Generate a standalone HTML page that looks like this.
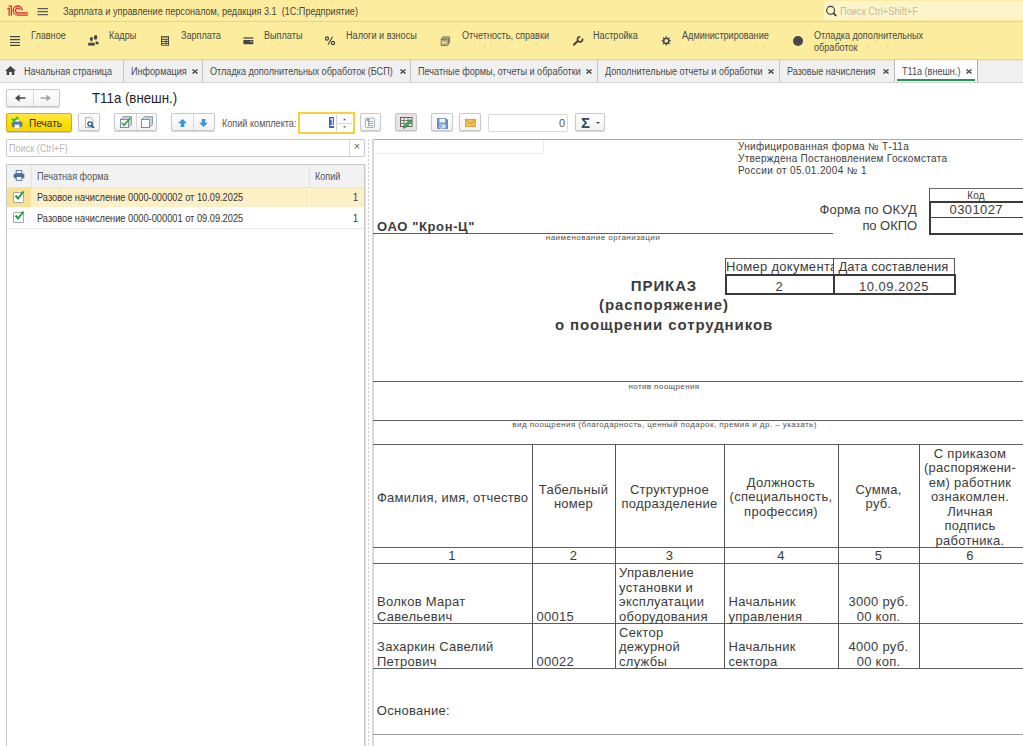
<!DOCTYPE html>
<html><head><meta charset="utf-8">
<style>
*{box-sizing:border-box;margin:0;padding:0}
html,body{width:1023px;height:746px;overflow:hidden;background:#fff;font-family:"Liberation Sans",sans-serif;color:#333}
.a{position:absolute}
.t{position:absolute;white-space:nowrap;font-size:10px;line-height:12px;transform:scaleX(.91);transform-origin:0 0;color:#4a4a4a}
#top{position:absolute;left:0;top:0;width:1023px;height:22px;background:#FBEC9E;border-bottom:1px solid #E2D48A}
#sec{position:absolute;left:0;top:22px;width:1023px;height:38px;background:#FBEC9E;border-bottom:1px solid #E4D68E}
#tabs{position:absolute;left:0;top:60px;width:1023px;height:23px;background:#F0F0F0;border-bottom:1px solid #D4D4D4}
.sep{position:absolute;top:60px;width:1px;height:22px;background:#C6C6C6}
.x{position:absolute;font-size:11px;font-weight:bold;color:#555;line-height:12px}
.btn{position:absolute;border:1px solid #C9C9C9;border-radius:2px;background:linear-gradient(#fff,#F2F2F2);box-shadow:0 1px 1px rgba(0,0,0,.18)}
.s{position:absolute;white-space:nowrap;font-size:13px;line-height:15px;color:#3c3c3c;letter-spacing:.2px}
.hl{position:absolute;background:#444;height:1px}
.vl{position:absolute;background:#444;width:1px}
</style></head><body>
<!-- title bar -->
<div id="top"></div>
<svg class="a" style="left:0;top:0" width="30" height="20" viewBox="0 0 30 20">
 <path d="M7.3 8.5 H9.2 V15.8" stroke="#DC2E2E" stroke-width="1.3" fill="none"/>
 <path d="M8.7 6.1 H11.4 V15.8" stroke="#DC2E2E" stroke-width="1.3" fill="none"/>
 <path d="M22.4 10.2 A4.6 4.6 0 1 0 17.8 15.2 H27.8" stroke="#DC2E2E" stroke-width="1.3" fill="none"/>
 <path d="M20.3 10.2 A2.4 2.4 0 1 0 17.8 13.0 H27.8" stroke="#DC2E2E" stroke-width="1.3" fill="none"/>
 <path d="M17.8 14.1 H27.8" stroke="#EE8A5A" stroke-width="1" fill="none"/>
</svg>
<svg class="a" style="left:37px;top:6px" width="12" height="10"><path d="M.5 2.6H11M.5 5.6H11M.5 8.6H11" stroke="#5a5a5a" stroke-width="1.1"/></svg>
<div class="t" style="left:63px;top:6px;font-size:10px;color:#4a4636">Зарплата и управление персоналом, редакция 3.1&nbsp; (1С:Предприятие)</div>
<div class="a" style="left:824px;top:1px;width:199px;height:19px;background:#FDF4C9;border-radius:2px 0 0 2px"></div>
<svg class="a" style="left:825px;top:5px" width="13" height="12" viewBox="0 0 13 12"><circle cx="5.6" cy="5.3" r="3.9" stroke="#333" stroke-width="1.1" fill="none"/><path d="M8.4 8.2L11.2 11" stroke="#333" stroke-width="1.7"/></svg>
<div class="t" style="left:840px;top:6px;color:#C2BC9E;transform:scaleX(.93)">Поиск Ctrl+Shift+F</div>

<!-- sections -->
<div id="sec"></div>
<svg class="a" style="left:0;top:30px" width="30" height="20" viewBox="0 30 30 20"><path d="M10 36.6H20M10 39.6H20M10 42.5H20M10 45.4H20" stroke="#454545" stroke-width="1.2"/></svg>
<div class="t" style="left:31px;top:30px">Главное</div>
<svg class="a" style="left:84px;top:32px" width="20" height="16" viewBox="84 32 20 16"><ellipse cx="95.6" cy="37.4" rx="1.7" ry="2.3" fill="#454545"/><path d="M95.6 41.3 Q98.9 41.3 98.9 44.2 H95.6Z" fill="#454545"/><ellipse cx="91.4" cy="39.1" rx="1.8" ry="2.4" fill="#454545" stroke="#FBEC9E" stroke-width=".5"/><path d="M87.9 45.8 V43.9 Q87.9 42.5 89.5 42.5 H93.4 Q95 42.5 95 43.9 V45.8Z" fill="#454545" stroke="#FBEC9E" stroke-width=".4"/></svg>
<div class="t" style="left:109px;top:30px">Кадры</div>
<svg class="a" style="left:157px;top:32px" width="20" height="16" viewBox="157 32 20 16"><rect x="161" y="36.2" width="8" height="9.5" fill="#454545"/><rect x="162" y="37.4" width="6" height="1.8" fill="#D9CD92"/><path d="M162 40.5H168M162 42.5H168M162 44.4H168" stroke="#F3E6A2" stroke-width="1"/><path d="M166.1 40V45" stroke="#454545" stroke-width=".8"/></svg>
<div class="t" style="left:181px;top:30px">Зарплата</div>
<svg class="a" style="left:240px;top:33px" width="18" height="16" viewBox="240 33 18 16"><rect x="243.4" y="37.2" width="9.9" height="1.6" fill="#6B6858"/><rect x="243.4" y="40.1" width="9.9" height="4.1" rx=".4" fill="#454545"/><path d="M250 41.6H252.3" stroke="#D8CC98" stroke-width="1"/></svg>
<div class="t" style="left:264px;top:30px">Выплаты</div>
<svg class="a" style="left:320px;top:32px" width="20" height="18" viewBox="320 32 20 18"><ellipse cx="327" cy="38.5" rx="1.5" ry="1.6" fill="none" stroke="#454545" stroke-width="1.2"/><ellipse cx="333" cy="43" rx="1.6" ry="1.6" fill="none" stroke="#454545" stroke-width="1.2"/><path d="M332.5 36.8L328.2 44.5" stroke="#454545" stroke-width="1.1"/></svg>
<div class="t" style="left:346px;top:30px">Налоги и взносы</div>
<svg class="a" style="left:435px;top:32px" width="20" height="18" viewBox="435 32 20 18"><path d="M442.5 37.6V36.9H449.6V42.5H448.9" fill="none" stroke="#6B6A58" stroke-width=".9"/><path d="M441.7 38.7V38.2H448.6V44.6H447.8" fill="none" stroke="#6B6A58" stroke-width=".9"/><rect x="441.2" y="39.3" width="5.9" height="6.3" fill="#EDE0A0" stroke="#6B6A58" stroke-width=".9"/><path d="M442.6 40.8H445.8M442.6 44.1H445.8" stroke="#6B6A58" stroke-width=".9"/></svg>
<div class="t" style="left:462px;top:30px">Отчетность, справки</div>
<svg class="a" style="left:566px;top:32px" width="22" height="18" viewBox="566 32 22 18"><path d="M573.9 44.7L577.4 41.3" stroke="#454545" stroke-width="2" stroke-linecap="round"/><path d="M579.6 36.9 A2.5 2.5 0 1 0 582.5 39.1" fill="none" stroke="#454545" stroke-width="1.7" stroke-linecap="round"/></svg>
<div class="t" style="left:593px;top:30px">Настройка</div>
<svg class="a" style="left:656px;top:32px" width="20" height="18" viewBox="656 32 20 18"><g transform="translate(666.25 40.9)"><circle r="2.55" fill="none" stroke="#454545" stroke-width="1.45"/><g stroke="#454545" stroke-width="1.3"><path d="M0 -2.6V-4.6M0 2.6V4.6M-2.6 0H-4.6M2.6 0H4.6M1.84 1.84L3.25 3.25M-1.84 -1.84L-3.25 -3.25M1.84 -1.84L3.25 -3.25M-1.84 1.84L-3.25 3.25"/></g></g></svg>
<div class="t" style="left:682px;top:30px">Администрирование</div>
<div class="a" style="left:793px;top:36px;width:10px;height:10px;border-radius:50%;background:#48484c"></div>
<div class="t" style="left:814px;top:30px">Отладка дополнительных</div>
<div class="t" style="left:814px;top:42px">обработок</div>

<!-- tabs -->
<div id="tabs"></div>
<div class="a" style="left:0;top:60px;width:1023px;height:1px;background:#E9E6D8"></div>
<svg class="a" style="left:5px;top:66px" width="11" height="9" viewBox="0 0 11 9"><path d="M5.5 0 L11 5 L9.3 5 L9.3 9 L6.8 9 L6.8 6 L4.2 6 L4.2 9 L1.7 9 L1.7 5 L0 5Z" fill="#444"/></svg>
<div class="t" style="left:24px;top:66px">Начальная страница</div>
<div class="sep" style="left:123px"></div>
<div class="t" style="left:131px;top:66px">Информация</div>
<svg class="a" style="left:192px;top:69px" width="6" height="5" viewBox="0 0 6 5"><path d="M.5 .4L5.5 4.6M5.5 .4L.5 4.6" stroke="#4a4a4a" stroke-width="1.3"/></svg>
<div class="sep" style="left:202px"></div>
<div class="t" style="left:210px;top:66px">Отладка дополнительных обработок (БСП)</div>
<svg class="a" style="left:400px;top:69px" width="6" height="5" viewBox="0 0 6 5"><path d="M.5 .4L5.5 4.6M5.5 .4L.5 4.6" stroke="#4a4a4a" stroke-width="1.3"/></svg>
<div class="sep" style="left:410px"></div>
<div class="t" style="left:418px;top:66px">Печатные формы, отчеты и обработки</div>
<svg class="a" style="left:586px;top:69px" width="6" height="5" viewBox="0 0 6 5"><path d="M.5 .4L5.5 4.6M5.5 .4L.5 4.6" stroke="#4a4a4a" stroke-width="1.3"/></svg>
<div class="sep" style="left:597px"></div>
<div class="t" style="left:605px;top:66px">Дополнительные отчеты и обработки</div>
<svg class="a" style="left:768px;top:69px" width="6" height="5" viewBox="0 0 6 5"><path d="M.5 .4L5.5 4.6M5.5 .4L.5 4.6" stroke="#4a4a4a" stroke-width="1.3"/></svg>
<div class="sep" style="left:779px"></div>
<div class="t" style="left:787px;top:66px">Разовые начисления</div>
<svg class="a" style="left:883px;top:69px" width="6" height="5" viewBox="0 0 6 5"><path d="M.5 .4L5.5 4.6M5.5 .4L.5 4.6" stroke="#4a4a4a" stroke-width="1.3"/></svg>
<div class="a" style="left:894px;top:60px;width:84px;height:22px;background:#fff;border-left:1px solid #B8B8B8;border-right:1px solid #A8A8A8"></div>
<div class="a" style="left:897px;top:79px;width:78px;height:2px;background:#1E9A48"></div>
<div class="t" style="left:902px;top:66px">Т11а (внешн.)</div>
<svg class="a" style="left:966px;top:69px" width="6" height="5" viewBox="0 0 6 5"><path d="M.5 .4L5.5 4.6M5.5 .4L.5 4.6" stroke="#4a4a4a" stroke-width="1.3"/></svg>

<!-- form header -->
<div class="btn" style="left:6px;top:89px;width:54px;height:18px"></div>
<div class="a" style="left:33px;top:90px;width:1px;height:16px;background:#DADADA"></div>
<svg class="a" style="left:4px;top:86px" width="60" height="24" viewBox="4 86 60 24"><path d="M15 98L19.6 94.4V101.6Z" fill="#444"/><path d="M18.5 98H24.8" stroke="#444" stroke-width="1.7" stroke-linecap="round"/><path d="M51 98L46.4 94.4V101.6Z" fill="#A6A6A6"/><path d="M47.5 98H41.2" stroke="#A6A6A6" stroke-width="1.7" stroke-linecap="round"/></svg>
<div class="a" style="left:92px;top:90px;font-size:14.5px;line-height:16px;white-space:nowrap;color:#1e1e1e;transform:scaleX(.915);transform-origin:0 0">Т11а (внешн.)</div>

<!-- toolbar -->
<div class="a" style="left:6px;top:113px;width:66px;height:19px;border:1px solid #D2AF00;border-radius:2px;background:linear-gradient(#FFE84A,#FFDD00 60%,#F7D500);box-shadow:0 1px 1px rgba(0,0,0,.22)"></div>
<svg class="a" style="left:11px;top:116px" width="13" height="13" viewBox="0 0 13 13"><rect x="4" y="3.3" width="4.2" height="3" fill="#fff" stroke="#8FA6C4" stroke-width=".6"/><rect x="1.2" y="6" width="9.7" height="4.6" rx=".8" fill="#5B7FAF" stroke="#3F5F8F" stroke-width=".7"/><rect x="3.8" y="8.8" width="4.6" height="3.6" fill="#fff" stroke="#9AAAC0" stroke-width=".5"/><path d="M0.9 2.7L3 4.6L7.3 1" stroke="#2DC412" stroke-width="1.9" fill="none"/></svg>
<div class="t" style="left:29px;top:117px;font-size:10px;line-height:13px;color:#2a2a2a;transform:none;letter-spacing:.05px">Печать</div>
<div class="btn" style="left:78px;top:113px;width:22px;height:18px"></div>
<svg class="a" style="left:84px;top:117px" width="12" height="12" viewBox="0 0 12 12"><path d="M1.5 .5H6.5L9 3V10.5H1.5Z" fill="#fff" stroke="#8AA0BC" stroke-width=".8"/><circle cx="6" cy="7" r="2.1" fill="none" stroke="#1E4F86" stroke-width="1.3"/><path d="M7.5 8.5L10 11" stroke="#1E4F86" stroke-width="1.6"/></svg>
<div class="btn" style="left:114px;top:113px;width:43px;height:18px"></div>
<div class="a" style="left:136px;top:114px;width:1px;height:16px;background:#D8D8D8"></div>
<svg class="a" style="left:120px;top:116px" width="12" height="12" viewBox="0 0 12 12"><path d="M.5 3.5L3.5 .5H11.5V8.5L8.5 11.5H.5Z" fill="#C8D0D8" stroke="#7E8E9E" stroke-width=".8"/><rect x=".5" y="3.5" width="8" height="8" fill="#F4F6F8" stroke="#6E7E8E" stroke-width=".8"/><path d="M2 7L4 9.2L10.5 1.8" stroke="#2AAA3A" stroke-width="1.7" fill="none"/></svg>
<svg class="a" style="left:141px;top:116px" width="12" height="12" viewBox="0 0 12 12"><path d="M.5 3.5L3.5 .5H11.5V8.5L8.5 11.5H.5Z" fill="#C8D0D8" stroke="#7E8E9E" stroke-width=".8"/><rect x=".5" y="3.5" width="8" height="8" fill="#fff" stroke="#6E7E8E" stroke-width=".8"/></svg>
<div class="btn" style="left:171px;top:113px;width:44px;height:18px"></div>
<div class="a" style="left:193px;top:114px;width:1px;height:16px;background:#D8D8D8"></div>
<svg class="a" style="left:178px;top:119px" width="9" height="8" viewBox="0 0 9 8"><path d="M4.5 0L9 4.2H6.3V8H2.7V4.2H0Z" fill="#3796DC"/></svg>
<svg class="a" style="left:199px;top:119px" width="9" height="8" viewBox="0 0 9 8"><path d="M4.5 8L9 3.8H6.3V0H2.7V3.8H0Z" fill="#3796DC"/></svg>
<div class="t" style="left:222px;top:118px;color:#555">Копий комплекта:</div>
<div class="a" style="left:298px;top:112px;width:57px;height:22px;border:2px solid #F8D03E;background:#fff"></div>
<div class="a" style="left:329px;top:117px;width:5px;height:11px;background:#3D5FC6"></div>
<div class="a" style="left:329px;top:116px;font-size:11px;line-height:13px;color:#fff;width:5px;text-align:center">1</div>
<div class="a" style="left:336px;top:115px;width:1px;height:16px;background:#D2D2D2"></div>
<div class="a" style="left:337px;top:123px;width:15px;height:1px;background:#D8D8D8"></div>
<svg class="a" style="left:342px;top:118px" width="5" height="11"><path d="M1 2.2L2.5 .6L4 2.2Z M1 8.2L2.5 9.8L4 8.2Z" fill="#555"/></svg>
<div class="btn" style="left:360px;top:113px;width:21px;height:18px"></div>
<svg class="a" style="left:360px;top:113px" width="22" height="19" viewBox="360 113 22 19"><rect x="365.6" y="118.2" width="8.8" height="9.2" rx="1" fill="#fff" stroke="#9AAABB" stroke-width="1"/><rect x="366.6" y="119" width="3" height="1.8" fill="#5A9ED6"/><path d="M368.5 121V126M368.5 121.6H373M368.5 123.6H373M368.5 125.6H373" stroke="#9A9A9A" stroke-width=".9"/></svg>
<div class="a" style="left:395px;top:113px;width:22px;height:18px;border:1px solid #C4C4C4;border-radius:2px;background:#E4E4E4;box-shadow:0 1px 1px rgba(0,0,0,.15)"></div>
<svg class="a" style="left:400px;top:117px" width="13" height="12" viewBox="0 0 13 12"><rect x=".5" y=".5" width="11.5" height="9" fill="#EDEDED" stroke="#555" stroke-width=".9"/><path d="M.5 3.5H12M.5 6.5H12M4 .5V9.5M8 .5V9.5" stroke="#666" stroke-width=".8"/><path d="M3.5 11.2L4.3 8.6L10 2.6L11.8 4.4L6 10.4Z" fill="#3FB24A" stroke="#2A7A35" stroke-width=".6"/><path d="M3.4 11.4L4.4 9.6" stroke="#B07A40" stroke-width="1.3"/></svg>
<div class="btn" style="left:431px;top:113px;width:22px;height:18px"></div>
<svg class="a" style="left:437px;top:118px" width="11" height="11" viewBox="0 0 11 11"><path d="M.5 .5H9L10.5 2V10.5H.5Z" fill="#6C9BD2" stroke="#4C78AE" stroke-width=".8"/><rect x="2.5" y=".8" width="5.5" height="3.7" fill="#F2F5F9"/><rect x="2.5" y="6.5" width="6" height="4" fill="#D4DFEC"/><rect x="3.4" y="7.5" width="1.2" height="2" fill="#4C78AE"/></svg>
<div class="btn" style="left:459px;top:113px;width:22px;height:18px"></div>
<svg class="a" style="left:465px;top:119px" width="11" height="8" viewBox="0 0 11 8"><rect x=".5" y=".5" width="10" height="7" fill="#F3BF50" stroke="#D8962E" stroke-width=".8"/><path d="M.6 .8L5.5 4.6L10.4 .8" stroke="#C98A2A" stroke-width=".8" fill="none"/></svg>
<div class="a" style="left:488px;top:114px;width:80px;height:18px;border:1px solid #DADADA;border-radius:2px;background:#fff"></div>
<div class="a" style="left:559px;top:117px;font-size:11px;line-height:13px;color:#555">0</div>
<div class="btn" style="left:575px;top:113px;width:30px;height:18px"></div>
<div class="a" style="left:581px;top:114px;font-size:15px;line-height:17px;font-weight:bold;color:#2F4A5C">Σ</div>
<div class="a" style="left:596px;top:122px;width:0;height:0;border-left:2px solid transparent;border-right:2px solid transparent;border-top:2px solid #444"></div>

<!-- left panel -->
<div class="a" style="left:6px;top:139px;width:359px;height:18px;border:1px solid #C8C8C8;border-radius:2px;background:#fff"></div>
<div class="a" style="left:349px;top:140px;width:1px;height:16px;background:#DADADA"></div>
<div class="t" style="left:9px;top:143px;color:#B8B8B8">Поиск (Ctrl+F)</div>
<div class="a" style="left:354px;top:141px;font-size:10px;line-height:12px;color:#555">×</div>
<div class="a" style="left:6px;top:164px;width:359px;height:582px;border:1px solid #C8C8C8;border-bottom:none;background:#fff"></div>
<div class="a" style="left:7px;top:165px;width:357px;height:23px;background:#F2F2F2;border-bottom:1px solid #E2E2E2"></div>
<div class="a" style="left:31px;top:165px;width:1px;height:22px;background:#E2E2E2"></div>
<div class="a" style="left:309px;top:165px;width:1px;height:22px;background:#E2E2E2"></div>
<svg class="a" style="left:13px;top:170px" width="12" height="11" viewBox="0 0 12 11"><rect x="3.2" y=".6" width="5.6" height="3" fill="#fff" stroke="#47709F" stroke-width=".9"/><rect x=".6" y="3.5" width="10.8" height="4.8" rx="1.5" fill="#47709F"/><rect x="3.2" y="6.5" width="5.6" height="3.8" fill="#fff" stroke="#47709F" stroke-width=".9"/></svg>
<div class="t" style="left:37px;top:171px;color:#555">Печатная форма</div>
<div class="t" style="left:315px;top:171px;color:#555">Копий</div>
<div class="a" style="left:7px;top:188px;width:357px;height:19px;background:#FDF0C6"></div>
<div class="a" style="left:7px;top:188px;width:24px;height:19px;background:#F9E194"></div>
<div class="a" style="left:309px;top:188px;width:1px;height:19px;background:#FFF8E6"></div>
<div class="a" style="left:7px;top:228px;width:357px;height:1px;background:#E6E6E6"></div>
<div class="a" style="left:13px;top:192px;width:11px;height:11px;border:1px solid #A8A8A8;border-radius:1px;background:#fff"></div>
<svg class="a" style="left:14px;top:190px" width="11" height="11" viewBox="0 0 11 11"><path d="M1.5 5.5L4 8.5L9.5 1.5" stroke="#1E9E3E" stroke-width="2" fill="none"/></svg>
<div class="t" style="left:37px;top:192px;color:#333;transform:scaleX(.925)">Разовое начисление 0000-000002 от 10.09.2025</div>
<div class="t" style="left:353px;top:192px;color:#333">1</div>
<div class="a" style="left:13px;top:212px;width:11px;height:11px;border:1px solid #A8A8A8;border-radius:1px;background:#fff"></div>
<svg class="a" style="left:14px;top:210px" width="11" height="11" viewBox="0 0 11 11"><path d="M1.5 5.5L4 8.5L9.5 1.5" stroke="#1E9E3E" stroke-width="2" fill="none"/></svg>
<div class="t" style="left:37px;top:213px;color:#333;transform:scaleX(.925)">Разовое начисление 0000-000001 от 09.09.2025</div>
<div class="t" style="left:353px;top:213px;color:#333">1</div>

<!-- splitter -->
<div class="a" style="left:365px;top:165px;width:1px;height:581px;background:#E2E2E2"></div>
<div class="a" style="left:368px;top:139px;width:1px;height:607px;background:repeating-linear-gradient(#CDCDCD 0 2.5px,transparent 2.5px 4px)"></div>

<!-- spreadsheet -->
<div class="a" style="left:372px;top:139px;width:651px;height:1px;background:#A9A9A9"></div>
<div class="a" style="left:372px;top:139px;width:2px;height:607px;background:#DADADA"></div>
<div class="a" style="left:373px;top:153px;width:170px;height:1px;background:#ECECEC"></div>
<div class="a" style="left:543px;top:140px;width:1px;height:13px;background:#ECECEC"></div>
<div class="a" style="left:373px;top:233px;width:460px;height:1px;background:#5e5e5e"></div>
<div class="a" style="left:929px;top:188px;width:94px;height:1px;background:#666"></div>
<div class="a" style="left:929px;top:188px;width:1px;height:13px;background:#555"></div>
<div class="a" style="left:929px;top:201px;width:2px;height:34px;background:#3a3a3a"></div>
<div class="a" style="left:929px;top:201px;width:94px;height:2px;background:#3a3a3a"></div>
<div class="a" style="left:929px;top:217px;width:94px;height:1px;background:#444"></div>
<div class="a" style="left:929px;top:233px;width:94px;height:2px;background:#3a3a3a"></div>
<div class="a" style="left:725px;top:258px;width:230px;height:1px;background:#666"></div>
<div class="a" style="left:725px;top:258px;width:1px;height:17px;background:#555"></div>
<div class="a" style="left:833px;top:258px;width:1px;height:17px;background:#555"></div>
<div class="a" style="left:954px;top:258px;width:1px;height:17px;background:#555"></div>
<div class="a" style="left:725px;top:274px;width:231px;height:2px;background:#3a3a3a"></div>
<div class="a" style="left:725px;top:293px;width:231px;height:2px;background:#3a3a3a"></div>
<div class="a" style="left:725px;top:274px;width:2px;height:21px;background:#3a3a3a"></div>
<div class="a" style="left:833px;top:274px;width:2px;height:21px;background:#3a3a3a"></div>
<div class="a" style="left:954px;top:274px;width:2px;height:21px;background:#3a3a3a"></div>
<div class="a" style="left:373px;top:381px;width:650px;height:1px;background:#5e5e5e"></div>
<div class="a" style="left:373px;top:420px;width:650px;height:1px;background:#5e5e5e"></div>
<div class="a" style="left:373px;top:444px;width:650px;height:1px;background:#5e5e5e"></div>
<div class="a" style="left:373px;top:547px;width:650px;height:1px;background:#5e5e5e"></div>
<div class="a" style="left:373px;top:563px;width:650px;height:1px;background:#5e5e5e"></div>
<div class="a" style="left:373px;top:623px;width:650px;height:1px;background:#5e5e5e"></div>
<div class="a" style="left:373px;top:668px;width:650px;height:1px;background:#5e5e5e"></div>
<div class="a" style="left:532px;top:444px;width:1px;height:225px;background:#555"></div>
<div class="a" style="left:615px;top:444px;width:1px;height:225px;background:#555"></div>
<div class="a" style="left:724px;top:444px;width:1px;height:225px;background:#555"></div>
<div class="a" style="left:838px;top:444px;width:1px;height:225px;background:#555"></div>
<div class="a" style="left:919px;top:444px;width:1px;height:225px;background:#555"></div>
<div class="a" style="left:373px;top:734px;width:650px;height:1px;background:#9A9A9A"></div>
<div class="s" style="left:738.00px;top:142.24px;font-size:10px;line-height:10px;letter-spacing:0.301px">Унифицированная форма № Т-11а</div>
<div class="s" style="left:738.00px;top:154.24px;font-size:10px;line-height:10px;letter-spacing:0.307px">Утверждена Постановлением Госкомстата</div>
<div class="s" style="left:738.00px;top:166.24px;font-size:10px;line-height:10px;letter-spacing:0.353px">России от 05.01.2004 № 1</div>
<div class="s" style="left:967.25px;top:191.24px;font-size:10px;line-height:10px;letter-spacing:0.166px">Код</div>
<div class="s" style="left:819.60px;top:203.40px;font-size:13px;line-height:13px;letter-spacing:0.084px">Форма по ОКУД</div>
<div class="s" style="left:949.50px;top:203.40px;font-size:13px;line-height:13px;letter-spacing:0.399px">0301027</div>
<div class="s" style="left:862.40px;top:218.90px;font-size:13px;line-height:13px;letter-spacing:-0.060px">по ОКПО</div>
<div class="s" style="left:377.00px;top:219.90px;font-size:13px;line-height:13px;letter-spacing:0.621px;font-weight:bold">ОАО "Крон-Ц"</div>
<div class="s" style="left:545.80px;top:234.43px;font-size:8px;line-height:8px;letter-spacing:0.478px;color:#505050">наименование организации</div>
<div class="a" style="left:725px;top:258.40px;width:108px;height:17px;overflow:hidden"><div class="s" style="left:1.00px;top:2px;font-size:13px;line-height:13px;letter-spacing:0.300px">Номер документа</div></div>
<div class="s" style="left:838.40px;top:260.40px;font-size:13px;line-height:13px;letter-spacing:0.080px">Дата составления</div>
<div class="s" style="left:775.39px;top:279.90px;font-size:13px;line-height:13px;letter-spacing:0.000px">2</div>
<div class="s" style="left:859.00px;top:279.90px;font-size:13px;line-height:13px;letter-spacing:0.494px">10.09.2025</div>
<div class="s" style="left:630.82px;top:278.20px;font-size:15px;line-height:15px;letter-spacing:0.900px;font-weight:bold">ПРИКАЗ</div>
<div class="s" style="left:599.11px;top:297.20px;font-size:15px;line-height:15px;letter-spacing:0.900px;font-weight:bold">(распоряжение)</div>
<div class="s" style="left:554.92px;top:316.70px;font-size:15px;line-height:15px;letter-spacing:0.900px;font-weight:bold">о поощрении сотрудников</div>
<div class="s" style="left:628.50px;top:382.63px;font-size:8px;line-height:8px;letter-spacing:0.385px;color:#505050">нотив поощрения</div>
<div class="s" style="left:512.30px;top:421.43px;font-size:8px;line-height:8px;letter-spacing:0.450px;color:#505050">вид поощрения (благодарность, ценный подарок, премия и др. – указать)</div>
<div class="s" style="left:377.00px;top:490.90px;font-size:13px;line-height:13px;letter-spacing:0.230px">Фамилия, имя, отчество</div>
<div class="s" style="left:538.83px;top:482.90px;font-size:13px;line-height:13px;letter-spacing:0.280px">Табельный</div>
<div class="s" style="left:553.90px;top:497.40px;font-size:13px;line-height:13px;letter-spacing:0.280px">номер</div>
<div class="s" style="left:629.92px;top:482.90px;font-size:13px;line-height:13px;letter-spacing:0.280px">Структурное</div>
<div class="s" style="left:621.47px;top:497.40px;font-size:13px;line-height:13px;letter-spacing:0.280px">подразделение</div>
<div class="s" style="left:746.83px;top:475.90px;font-size:13px;line-height:13px;letter-spacing:0.280px">Должность</div>
<div class="s" style="left:729.58px;top:490.40px;font-size:13px;line-height:13px;letter-spacing:0.280px">(специальность,</div>
<div class="s" style="left:744.07px;top:504.90px;font-size:13px;line-height:13px;letter-spacing:0.280px">профессия)</div>
<div class="s" style="left:855.43px;top:482.90px;font-size:13px;line-height:13px;letter-spacing:0.280px">Сумма,</div>
<div class="s" style="left:865.55px;top:497.40px;font-size:13px;line-height:13px;letter-spacing:0.280px">руб.</div>
<div class="s" style="left:933.81px;top:446.90px;font-size:13px;line-height:13px;letter-spacing:0.280px">С приказом</div>
<div class="s" style="left:923.99px;top:461.40px;font-size:13px;line-height:13px;letter-spacing:0.280px">(распоряжени-</div>
<div class="s" style="left:928.80px;top:475.90px;font-size:13px;line-height:13px;letter-spacing:0.280px">ем) работник</div>
<div class="s" style="left:930.93px;top:490.40px;font-size:13px;line-height:13px;letter-spacing:0.280px">ознакомлен.</div>
<div class="s" style="left:947.15px;top:504.90px;font-size:13px;line-height:13px;letter-spacing:0.280px">Личная</div>
<div class="s" style="left:944.45px;top:519.40px;font-size:13px;line-height:13px;letter-spacing:0.280px">подпись</div>
<div class="s" style="left:935.57px;top:533.90px;font-size:13px;line-height:13px;letter-spacing:0.280px">работника.</div>
<div class="s" style="left:448.25px;top:549.40px;font-size:13px;line-height:13px;letter-spacing:0.280px">1</div>
<div class="s" style="left:569.75px;top:549.40px;font-size:13px;line-height:13px;letter-spacing:0.280px">2</div>
<div class="s" style="left:665.75px;top:549.40px;font-size:13px;line-height:13px;letter-spacing:0.280px">3</div>
<div class="s" style="left:777.25px;top:549.40px;font-size:13px;line-height:13px;letter-spacing:0.280px">4</div>
<div class="s" style="left:874.75px;top:549.40px;font-size:13px;line-height:13px;letter-spacing:0.280px">5</div>
<div class="s" style="left:966.25px;top:549.40px;font-size:13px;line-height:13px;letter-spacing:0.280px">6</div>
<div class="s" style="left:377.00px;top:595.40px;font-size:13px;line-height:13px;letter-spacing:0.280px">Волков Марат</div>
<div class="s" style="left:377.00px;top:609.90px;font-size:13px;line-height:13px;letter-spacing:0.280px">Савельевич</div>
<div class="s" style="left:536.50px;top:609.90px;font-size:13px;line-height:13px;letter-spacing:0.280px">00015</div>
<div class="a" style="left:616px;top:564.40px;width:108px;height:17px;overflow:hidden"><div class="s" style="left:3.00px;top:2px;font-size:13px;line-height:13px;letter-spacing:0.280px">Управление</div></div>
<div class="a" style="left:616px;top:578.90px;width:108px;height:17px;overflow:hidden"><div class="s" style="left:3.00px;top:2px;font-size:13px;line-height:13px;letter-spacing:0.280px">установки и</div></div>
<div class="a" style="left:616px;top:593.40px;width:108px;height:17px;overflow:hidden"><div class="s" style="left:3.00px;top:2px;font-size:13px;line-height:13px;letter-spacing:0.280px">эксплуатации</div></div>
<div class="a" style="left:616px;top:607.90px;width:108px;height:17px;overflow:hidden"><div class="s" style="left:3.00px;top:2px;font-size:13px;line-height:13px;letter-spacing:0.280px">оборудования</div></div>
<div class="s" style="left:728.50px;top:595.40px;font-size:13px;line-height:13px;letter-spacing:0.280px">Начальник</div>
<div class="s" style="left:728.50px;top:609.90px;font-size:13px;line-height:13px;letter-spacing:0.280px">управления</div>
<div class="s" style="left:848.58px;top:595.40px;font-size:13px;line-height:13px;letter-spacing:0.280px">3000 руб.</div>
<div class="s" style="left:856.63px;top:609.90px;font-size:13px;line-height:13px;letter-spacing:0.280px">00 коп.</div>
<div class="s" style="left:377.00px;top:640.40px;font-size:13px;line-height:13px;letter-spacing:0.280px">Захаркин Савелий</div>
<div class="s" style="left:377.00px;top:654.90px;font-size:13px;line-height:13px;letter-spacing:0.280px">Петрович</div>
<div class="s" style="left:536.50px;top:654.90px;font-size:13px;line-height:13px;letter-spacing:0.280px">00022</div>
<div class="a" style="left:616px;top:623.90px;width:108px;height:17px;overflow:hidden"><div class="s" style="left:3.00px;top:2px;font-size:13px;line-height:13px;letter-spacing:0.280px">Сектор</div></div>
<div class="a" style="left:616px;top:638.40px;width:108px;height:17px;overflow:hidden"><div class="s" style="left:3.00px;top:2px;font-size:13px;line-height:13px;letter-spacing:0.280px">дежурной</div></div>
<div class="a" style="left:616px;top:652.90px;width:108px;height:17px;overflow:hidden"><div class="s" style="left:3.00px;top:2px;font-size:13px;line-height:13px;letter-spacing:0.280px">службы</div></div>
<div class="s" style="left:728.50px;top:640.40px;font-size:13px;line-height:13px;letter-spacing:0.280px">Начальник</div>
<div class="s" style="left:728.50px;top:654.90px;font-size:13px;line-height:13px;letter-spacing:0.280px">сектора</div>
<div class="s" style="left:848.58px;top:640.40px;font-size:13px;line-height:13px;letter-spacing:0.280px">4000 руб.</div>
<div class="s" style="left:856.63px;top:654.90px;font-size:13px;line-height:13px;letter-spacing:0.280px">00 коп.</div>
<div class="s" style="left:376.80px;top:703.90px;font-size:13px;line-height:13px;letter-spacing:0.280px">Основание:</div>
</body></html>
